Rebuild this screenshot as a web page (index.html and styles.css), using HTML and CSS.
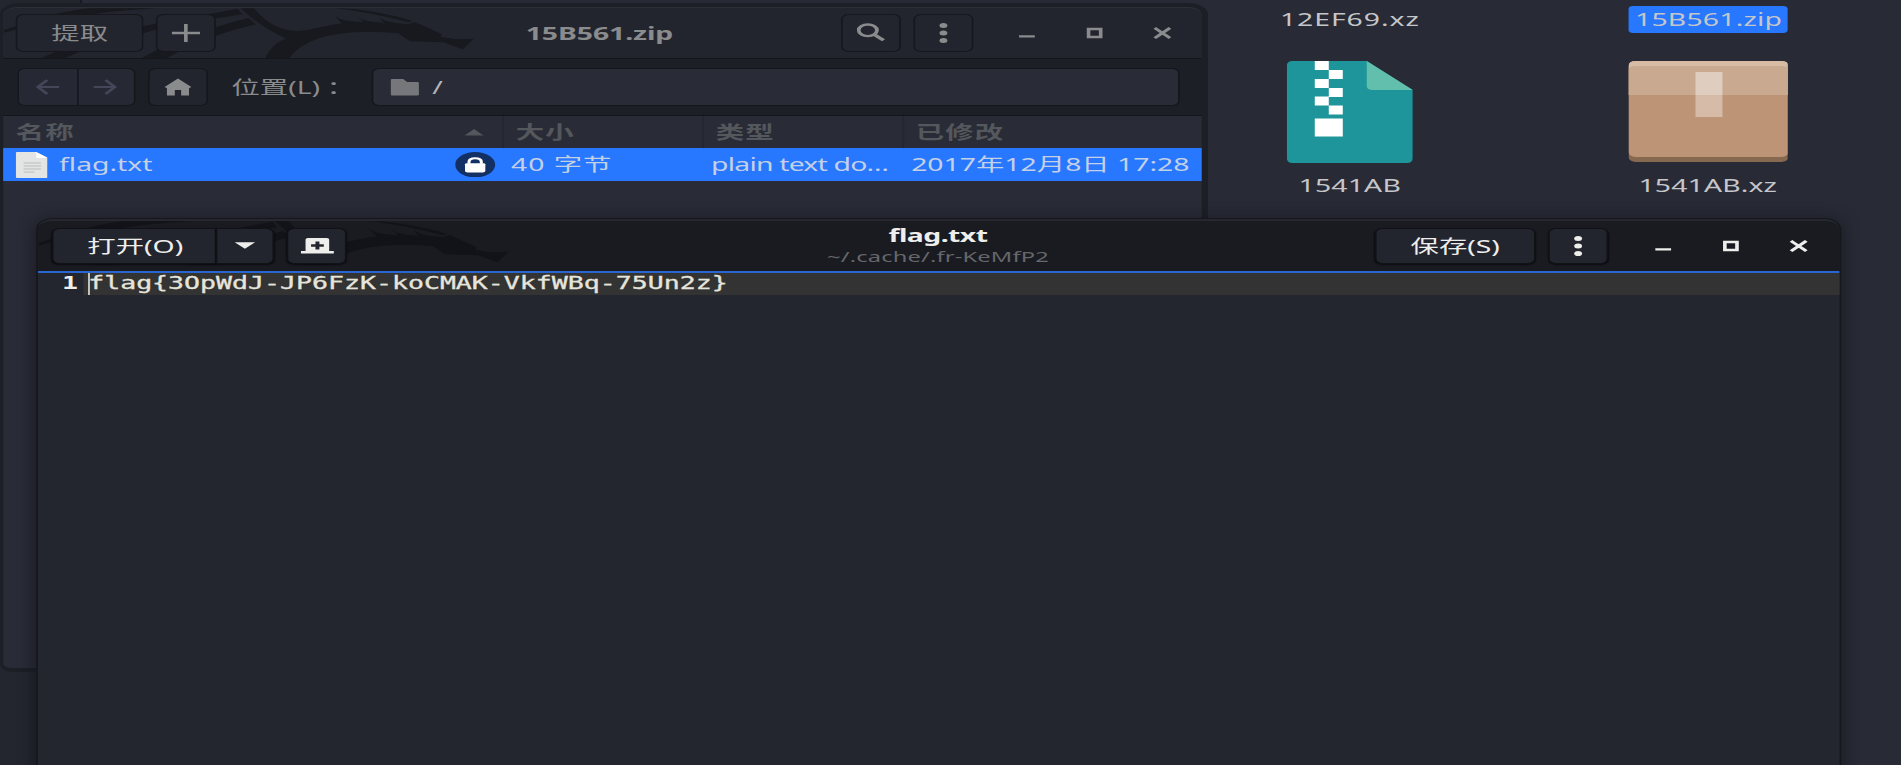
FILE: index.html
```html
<!DOCTYPE html>
<html lang="zh-CN">
<head>
<meta charset="utf-8">
<title>15B561.zip</title>
<link rel="stylesheet" href="styles.css">
</head>
<body>
<svg class="defs" width="0" height="0" aria-hidden="true">
  <symbol id="dragon" viewBox="0 0 1500 175" preserveAspectRatio="none">
    <path d="M12 90C100 65 150 38 270 25H470C350 32 200 45 12 98Z"/>
    <path d="M712 26L640 40L430 78C330 100 200 135 125 175H195C280 135 360 112 430 100L470 88C540 72 640 56 728 43Z"/>
    <path d="M745 54L768 73C680 92 580 130 500 175H425C500 130 620 85 745 54Z"/>
    <path d="M722 25H762C800 70 840 92 890 93C930 92 960 80 1010 72C1060 66 1120 68 1200 78L1246 67L1325 102L1322 111L1370 118L1421 116L1388 148L1330 127L1230 124L1195 100C1080 92 930 90 868 175H795C810 145 830 125 858 116C800 90 760 60 722 25Z"/>
    <path d="M1002 45C1020 62 1050 66 1100 66V76H1030ZM1070 48C1085 62 1110 66 1150 68V80L1100 74ZM1138 52C1155 66 1180 70 1220 72V82L1160 80Z"/>
    <path d="M1005 24C1080 26 1170 42 1237 62L1225 67C1160 48 1080 34 1005 24Z"/>
  </symbol>
  <symbol id="dots" viewBox="0 0 16 20"><circle cx="8" cy="2.5" r="2.5"/><circle cx="8" cy="10" r="2.5"/><circle cx="8" cy="17.5" r="2.5"/></symbol>
  <symbol id="min" viewBox="0 0 12 12"><path d="M1 8.3h10v2.2H1z"/></symbol>
  <symbol id="max" viewBox="0 0 12 12"><path fill-rule="evenodd" d="M1 .8h10v10.4H1zM3.3 3.2v5.6h5.4V3.2z"/></symbol>
  <symbol id="close" viewBox="0 0 12 12"><path d="M2 1.8L10 10.2M10 1.8L2 10.2" fill="none" stroke="currentColor" stroke-width="2.4" stroke-linecap="square"/></symbol>
</svg>
<div class="screen">
  <div class="files-sidebar"></div>

  <div class="desktop">
    <div class="item"><span class="label loose">12EF69.xz</span></div>
    <div class="item"><span class="label selected">15B561.zip</span></div>
    <div class="item">
      <svg class="zip" viewBox="0 0 126 102" preserveAspectRatio="none">
        <path fill="#1e959a" d="M6 0H80L126 29V97Q126 102 120 102H6Q0 102 0 97V5Q0 0 6 0Z"/>
        <path fill="#62bfae" d="M80 0L126 29H86Q80 29 80 25Z"/>
        <path fill="#fff" d="M28 0h14v9H28zM42 9h14v9H42zM28 18h14v9H28zM42 27h14v9H42zM28 35.500h14v9H28zM42 44.500h14v9H42zM28 57.500h28v18H28z"/>
      </svg>
      <span class="label">1541AB</span>
    </div>
    <div class="item">
      <svg class="box" viewBox="0 0 160 101" preserveAspectRatio="none">
        <rect width="160" height="101" rx="7" ry="5" fill="#86694f"/>
        <rect width="160" height="96" rx="7" ry="5" fill="#be9477"/>
        <path fill="#d7bba5" d="M7 0H153Q160 0 160 5V34H0V5Q0 0 7 0Z"/>
        <path fill="#c9aa90" d="M7 5H153Q160 5 160 9V34H0V9Q0 5 7 5Z"/>
        <path fill="#dfcdbf" d="M67 11h27v23H67z"/><path fill="#d6bba8" d="M67 34h27v22H67z"/>
      </svg>
      <span class="label">1541AB.xz</span>
    </div>
  </div>

  <section class="window archive">
    <header class="titlebar">
      <svg class="dragon"><use href="#dragon"/></svg>
      <div class="group start">
        <button class="btn extract">提取</button>
        <button class="btn sq"><svg width="18" height="18" viewBox="0 0 18 18"><path d="M9 0V18M0 9H18" stroke="currentColor" stroke-width="2.300"/></svg></button>
      </div>
      <h1 class="title">15B561.zip</h1>
      <div class="group end">
        <button class="btn sq"><svg width="18" height="19" viewBox="0 0 18 19"><circle cx="7" cy="7.300" r="5.800" fill="none" stroke="currentColor" stroke-width="2.400"/><path d="M11 11.500L17 17.300" stroke="currentColor" stroke-width="2.800"/></svg></button>
        <button class="btn sq"><svg width="16" height="20"><use href="#dots"/></svg></button>
        <div class="controls">
          <svg><use href="#min"/></svg><svg><use href="#max"/></svg><svg><use href="#close"/></svg>
        </div>
      </div>
    </header>
    <div class="toolbar">
      <div class="nav">
        <button class="btn"><svg width="16" height="16" viewBox="0 0 16 16"><path d="M8 1L2 8L8 15M2 8H15.500" fill="none" stroke="currentColor" stroke-width="2"/></svg></button>
        <button class="btn"><svg width="16" height="16" viewBox="0 0 16 16"><path d="M8 1L14 8L8 15M14 8H.5" fill="none" stroke="currentColor" stroke-width="2"/></svg></button>
      </div>
      <button class="btn sq home"><svg width="18" height="18" viewBox="0 0 18 18"><path fill="currentColor" d="M9 .5L17.500 9L16 10.300V17.500H11V12H7V17.500H2V10.300L.5 9Z"/></svg></button>
      <span class="loc">位置(L)<span class="colon">：</span></span>
      <div class="entry"><svg width="18" height="17" viewBox="0 0 18 17"><path fill="currentColor" d="M1 0H8L10.500 3H17Q18 3 18 4V15.500Q18 16.500 17 16.500H1Q0 16.500 0 15.500V1Q0 0 1 0Z"/></svg><span>/</span></div>
    </div>
    <div class="row head">
      <div class="c1">名称<svg class="sort" width="12" height="7" viewBox="0 0 12 7"><path fill="currentColor" d="M0 6.500L6 0L12 6.500Z"/></svg></div>
      <div>大小</div><div>类型</div><div>已修改</div>
    </div>
    <div class="row file">
      <div class="c1">
        <svg width="20.500" height="26" viewBox="0 0 20.500 26"><path fill="#e3e4e4" d="M1 0H13L20.500 6V25Q20.500 26 19.500 26H1Q0 26 0 25V1Q0 0 1 0Z"/><path fill="#fff" d="M13 0L20.500 6H14Q13 6 13 5Z"/><path stroke="#bcbdbe" stroke-width="1.200" d="M5 11H16M5 14H16M5 17H16M5 20H12"/></svg>
        <span>flag.txt</span>
        <svg class="lock" width="25.400" height="25.400" viewBox="0 0 26 26"><circle cx="13" cy="13" r="13" fill="#123063"/><path fill="#fff" d="M7.500 11.500H18.500Q19.600 11.500 19.600 12.600V19.500Q19.600 21 18 21H8Q6.400 21 6.400 19.500V12.600Q6.400 11.500 7.500 11.500Z"/><path d="M9 12V10Q9 6.300 13 6.300T17 10V12" fill="none" stroke="#fff" stroke-width="2"/></svg>
      </div>
      <div><span class="size">40 字节</span></div><div><span class="kind">plain text do…</span></div><div><span>2017年12月8日 17:28</span></div>
    </div>
  </section>

  <section class="window editor">
    <header class="titlebar">
      <svg class="dragon"><use href="#dragon"/></svg>
      <div class="group start">
        <div class="nav">
          <button class="btn open">打开(O)</button>
          <button class="btn drop"><svg width="13" height="7" viewBox="0 0 13 7"><path fill="currentColor" d="M0 .3H13L6.500 6.800Z"/></svg></button>
        </div>
        <button class="btn sq"><svg width="21" height="16" viewBox="0 0 21 16"><path fill="currentColor" fill-rule="evenodd" d="M4.500 0H16.500Q18 0 18 1.500V13H21V15.500H0V13H3V1.500Q3 0 4.500 0ZM9.300 3.500V6.300H6.500V8.800H9.300V11.500H11.800V8.800H14.600V6.300H11.800V3.500Z"/></svg></button>
      </div>
      <div class="titles"><h1 class="title">flag.txt</h1><p class="subtitle">~/.cache/.fr-KeMfP2</p></div>
      <div class="group end">
        <button class="btn save">保存(S)</button>
        <button class="btn sq"><svg width="16" height="20"><use href="#dots"/></svg></button>
        <div class="controls">
          <svg><use href="#min"/></svg><svg><use href="#max"/></svg><svg><use href="#close"/></svg>
        </div>
      </div>
    </header>
    <div class="line"><span class="num">1</span><code>flag{3OpWdJ-JP6FzK-koCMAK-VkfWBq-75Un2z}</code></div>
  </section>
</div>
</body>
</html>
```
FILE: styles.css
```css
* { box-sizing: border-box; }
body { margin: 0; overflow: hidden; background: #282a35; }
.defs { position: absolute; }
/* The desktop is a 1207px canvas displayed on a wider screen. */
.screen {
  position: relative;
  width: 1207px;
  height: 765px;
  overflow: hidden;
  transform: scaleX(1.575);
  transform-origin: 0 0;
  background: #282a35;
  color: #8a8b8d;
  font: 18px/24px "Noto Sans", "Noto Sans CJK SC", sans-serif;
}
svg { display: block; flex: none; fill: currentColor; }
.files-sidebar { position: absolute; inset: 0 auto 0 0; width: 51.500px; background: #23262e; border-right: 1px solid #16181e; }

.desktop {
  position: absolute;
  left: 763px;
  top: 6px;
  display: grid;
  grid-template-columns: 188px 188px;
  column-gap: 39.300px;
  grid-template-rows: 55px auto;
}
.item { display: flex; flex-direction: column; align-items: center; }
.label { height: 27px; line-height: 26px; padding: 0 7px; color: #c5c6ca; border-radius: 3px; letter-spacing: .12px; }
.label.loose { letter-spacing: .6px; }
.label.selected { width: 101.500px; padding: 0 0 0 1px; text-align: center; background: #2777ff; }
.item svg + .label { margin-top: 9px; }
.zip { width: 80px; height: 102px; }
.box { width: 101.500px; height: 101px; margin-bottom: 1px; }

.window { position: absolute; }
.titlebar { position: relative; display: grid; grid-template-columns: 1fr auto 1fr; align-items: center; }
.dragon { position: absolute; left: 0; top: 0; width: 317.500px; height: 58.300px; }
.group { position: relative; display: flex; align-items: center; }
.end { justify-content: flex-end; }
.title { margin: 0; font-size: 18px; line-height: 22px; font-weight: 700; }
.btn {
  display: flex;
  align-items: center;
  justify-content: center;
  height: 38px;
  padding: 0;
  border: 1px solid #15171c;
  border-radius: 5px;
  background: #23252e;
  color: inherit;
  font: inherit;
}
.sq { width: 38px; }
.nav { display: flex; }
.nav .btn:first-child { border-radius: 5px 0 0 5px; border-right: 0; }
.nav .btn:last-child { border-radius: 0 5px 5px 0; }
.controls { display: flex; }
.controls svg { width: 12px; height: 12px; margin: 0 15.600px; }

.archive {
  left: 0;
  top: 3px;
  width: 767.200px;
  height: 669px;
  border: solid #1d1f26;
  border-width: 4px 4.500px 4px 2.500px;
  border-radius: 12px 12px 8px 8px;
  background: #292b36;
}
.archive .titlebar {
  height: 52px;
  padding: 0 3.400px 1px 8.200px;
  border-top: 1px solid #2e3039;
  border-bottom: 1px solid #14161b;
  border-radius: 9px 9px 0 0;
  background: #23252e;
}
.archive .dragon { left: -2.500px; top: -8px; color: #17191e; clip-path: inset(8px 0 0 2.500px); }
.archive .start { gap: 8px; }
.extract { width: 80.800px; }
.archive .title { position: relative; left: -4.400px; letter-spacing: -.05px; }
.archive .end { gap: 7.600px; }
.archive .controls { margin-left: 5px; }

.toolbar { display: flex; align-items: center; height: 57px; padding: 0 14.300px 0 9px; border-bottom: 1px solid #14161b; background: #1c1f25; }
.toolbar .nav .btn { width: 37.500px; color: #434759; background: #262834; }
.toolbar .home { margin-left: 8px; }
.loc { width: 88.500px; margin-left: 15px; white-space: nowrap; }
.colon { margin-left: 4px; }
.entry { display: flex; align-items: center; gap: 9px; flex: 1; height: 38px; padding-left: 11px; border: 1px solid #14161b; border-radius: 5px; background: #292b36; color: #76777b; }
.entry span { color: #b4b5b8; }

.row { display: grid; grid-template-columns: 316.500px 127px 127px 1fr; white-space: nowrap; }
.row > div { display: flex; align-items: center; }
.head { height: 32px; color: #54575c; font-weight: 700; letter-spacing: .7px; }
.head > div { padding-left: 8px; border-left: 1px solid #24262f; }
.head .c1 { border: 0; }
.sort { margin-left: auto; margin-right: 11.500px; }
.file { height: 33px; background: #2777ff; color: #c3d0e6; }
.file > div { padding-left: 6px; }
.file span { margin-top: -1px; }
.file .c1 { padding-left: 7.500px; gap: 7.500px; }
.size { letter-spacing: .6px; }
.kind { letter-spacing: -.5px; }
.lock { margin-left: auto; margin-right: 3.700px; }

.editor {
  left: 23.200px;
  top: 218px;
  width: 1145.800px;
  height: 560px;
  border: solid #15171c;
  border-width: 1px 1.700px;
  border-radius: 11px 11px 0 0;
  background: #23262e;
  color: #eeeeec;
  box-shadow: inset 0 2px #272930, 0 2px 12px 1px rgba(12, 14, 20, .5);
}
.editor .titlebar {
  height: 54px;
  margin: 0;
  padding: 0 4px 1px 9.300px;
  border-top: 2px solid #26282f;
  border-bottom: 2px solid #2966d0;
  border-radius: 10px 10px 0 0;
  background: #191b21;
}
.editor .dragon { left: -2px; top: -8px; color: #111318; clip-path: inset(8px 0 6px 2px); }
.editor .btn { height: 36px; border-color: #111216; box-shadow: 0 1px 1px #0c0d10; }
.editor .start { gap: 8px; }
.open { width: 103.800px; }
.drop { width: 37px; }
.save { width: 102px; margin-right: 8.500px; }
.editor .controls { margin-left: 13px; }
.titles { position: relative; left: -3.200px; text-align: center; }
.editor .title { letter-spacing: -.35px; }
.subtitle { margin: 0; color: #66676b; font-size: 15px; line-height: 21px; letter-spacing: .12px; }
.line { display: flex; height: 22px; font: 16.880px/20px "DejaVu Sans Mono", "Liberation Mono", monospace; }
.num { width: 28.800px; padding-right: 3.500px; text-align: right; font-weight: 700; }
.line code { flex: 1; padding-left: 3px; font: inherit; background: linear-gradient(#e6e6e6, #e6e6e6) 3px 0 / 1px 100% no-repeat #333333; color: #e6e5dc; -webkit-text-stroke: .3px #e6e5dc; }
```
